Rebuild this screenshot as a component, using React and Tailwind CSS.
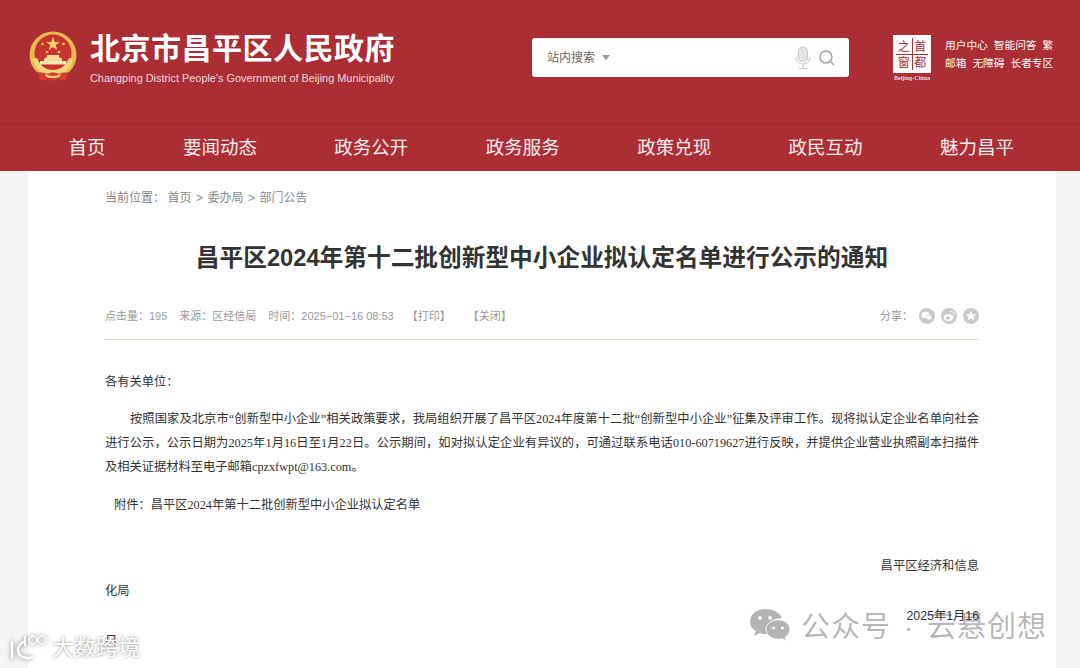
import React from 'react';

const sans = "font-['Liberation_Sans','Noto_Sans_CJK_SC',sans-serif]";
const serif = "font-['Liberation_Serif','Noto_Sans_CJK_SC',serif]";

const navItems = ['首页', '要闻动态', '政务公开', '政务服务', '政策兑现', '政民互动', '魅力昌平'];

const Emblem = () => (
  <svg width="48" height="52" viewBox="0 0 48 52">
    <circle cx="24" cy="24" r="23.500" fill="#e8b94f" />
    <circle cx="24" cy="22" r="18.500" fill="#c8322c" />
    <path d="M4 28c2 10 10 17 20 17s18-7 20-17l-4-1c-3 8-9 12-16 12S11 35 8 27z" fill="#f3d77a" />
    <path d="M24 6l1.700 5h5.100l-4.100 3 1.600 5-4.300-3-4.300 3 1.600-5-4.100-3h5.100z" fill="#f5d76e" />
    <circle cx="13.500" cy="13" r="1.300" fill="#f5d76e" />
    <circle cx="34.500" cy="13" r="1.300" fill="#f5d76e" />
    <circle cx="18" cy="21" r="1.300" fill="#f5d76e" />
    <circle cx="30" cy="21" r="1.300" fill="#f5d76e" />
    <path d="M15 30h18v-2.500l-3-1.500v-2H18v2l-3 1.500z" fill="#f2dc9a" />
    <rect x="11" y="30" width="26" height="3.500" fill="#f7e7b2" />
    <path d="M9 41c3 1 7 0 10 2 2-2 8-2 10 0 3-2 7-1 10-2l-2 8c-3 1-6 0-8-1-3 2-7 2-10 0-2 1-5 2-8 1z" fill="#d63d2e" />
    <path d="M16 42c2 4 14 4 16 0l-1 3.500c-3 2-11 2-14 0z" fill="#f3d77a" />
  </svg>
);

const Seal = () => (
  <div className="flex flex-col items-center w-[44px]">
    <div className="w-[38px] h-[38px] bg-white p-[3px]">
      <div className="w-full h-full grid grid-cols-2 grid-rows-2 gap-[1px] bg-[#ac2e35] text-[#ac2e35] text-[12px] leading-none font-['Noto_Sans_CJK_SC',sans-serif]">
        <span className="bg-white flex items-center justify-center">之</span>
        <span className="bg-white flex items-center justify-center">首</span>
        <span className="bg-white flex items-center justify-center">窗</span>
        <span className="bg-white flex items-center justify-center">都</span>
      </div>
    </div>
    <span className="text-[6px] leading-[8px] mt-[1px] font-bold text-[#f0d9da] whitespace-nowrap font-['Liberation_Serif',serif]">Beijing-China</span>
  </div>
);

const ShareIcon = ({ children }) => (
  <svg width="16" height="16" viewBox="0 0 16 16">
    <circle cx="8" cy="8" r="8" fill="#c9c9c9" />
    {children}
  </svg>
);

const WechatLogo = () => (
  <svg width="42" height="36" viewBox="0 0 42 36">
    <path d="M16 1C7.700 1 1 6.600 1 13.500c0 4 2.200 7.400 5.700 9.700L5 28l5.600-2.900c1.700.5 3.500.9 5.400.9 1 0 2-.1 2.900-.3-.5-1.300-.7-2.600-.7-4 0-6.300 6-11.400 13.600-11.400.5 0 .9 0 1.300.1C31.400 5 24.400 1 16 1z" fill="#b4b4b4" />
    <path d="M41 21.500c0-5.400-5.400-9.800-12-9.800s-12 4.400-12 9.800 5.400 9.800 12 9.800c1.400 0 2.800-.2 4-.6l4.400 2.600-1.200-4.100c2.900-1.800 4.800-4.600 4.800-7.700z" fill="#b4b4b4" stroke="#fff" strokeWidth="1" />
    <circle cx="11" cy="10" r="1.900" fill="#fff" />
    <circle cx="21" cy="10" r="1.900" fill="#fff" />
    <circle cx="24.500" cy="20" r="1.600" fill="#fff" />
    <circle cx="33.500" cy="20" r="1.600" fill="#fff" />
  </svg>
);

const WatermarkLogo = () => (
  <svg width="40" height="28" viewBox="0 0 40 28" fill="none" stroke="#fff" strokeWidth="2.400" strokeLinecap="round" className="[filter:drop-shadow(0_0_2px_rgba(0,0,0,0.5))]">
    <path d="M3 8v16" />
    <path d="M16 7c-4 2-7 5-7 9 0 5 4 8 10 8 2 0 3-.5 4-1" />
    <circle cx="24" cy="6" r="4" strokeWidth="1.500" />
    <circle cx="33" cy="6" r="4" strokeWidth="1.500" />
    <path d="M16 3v9" strokeWidth="1.800" />
  </svg>
);

export default function App() {
  return (
    <div className={`relative h-[668px] w-[1080px] overflow-hidden bg-[#f5f5f5] ${sans}`}>
      {/* Header */}
      <header className="h-[124px] bg-[#ac2e35] border-b border-[#a0272e] flex items-start">
        <div className="ml-[29px] mt-[31px]">
          <Emblem />
        </div>
        <div className="ml-[13px] mt-[31px] w-[320px]">
          <div className="text-[30px] leading-[36px] font-bold text-white tracking-[0.5px] whitespace-nowrap">北京市昌平区人民政府</div>
          <div className="text-[10.900px] leading-[12px] mt-[5px] text-[#f1d9da] whitespace-nowrap">Changping District People's Government of Beijing Municipality</div>
        </div>
        <div className="ml-[122px] mt-[38px] w-[317px] h-[39px] bg-white rounded-[3px] flex items-center pl-[15px] pr-[14px]">
          <span className="text-[12px] text-[#666]">站内搜索</span>
          <span className="ml-[7px] w-0 h-0 border-x-[4px] border-x-transparent border-t-[5px] border-t-[#999]" />
          <svg className="ml-auto" width="16" height="24" viewBox="0 0 16 24" fill="none" stroke="#ccc" strokeWidth="1.200">
            <rect x="3.500" y="1" width="9" height="15" rx="4.500" fill="#e4e4e4" />
            <path d="M1 11c0 4.500 3 7 7 7s7-2.500 7-7M8 18v4M4 22.500h8" />
          </svg>
          <svg className="ml-[8px]" width="16" height="16" viewBox="0 0 16 16" fill="none" stroke="#999" strokeWidth="1.300">
            <circle cx="7" cy="7" r="6" />
            <path d="M11.500 11.500L15 15" />
          </svg>
        </div>
        <div className="ml-[41px] mt-[35px]">
          <Seal />
        </div>
        <div className="ml-[11px] mt-[36px] text-[10.700px] leading-[18px] text-white whitespace-nowrap">
          <div className="flex gap-[6px]"><span>用户中心</span><span>智能问答</span><span>繁</span></div>
          <div className="flex gap-[6px]"><span>邮箱</span><span>无障碍</span><span>长者专区</span></div>
        </div>
      </header>

      {/* Nav */}
      <nav className="h-[47px] bg-[#ac2e35] flex items-center gap-[77.400px] pl-[68.500px]">
        {navItems.map((item) => (
          <span key={item} className="text-[18.500px] text-[#f8eeee]">{item}</span>
        ))}
      </nav>

      {/* Main */}
      <main className="mx-[28px] w-[1028px] h-[497px] bg-white px-[77px]">
        <div className="pt-[18px] text-[12px] leading-[18px] text-[#888] flex gap-[4.500px]">
          <span className="mr-[-2px]">当前位置：</span>
          <span>首页</span><span>&gt;</span><span>委办局</span><span>&gt;</span><span>部门公告</span>
        </div>
        <h1 className="mt-[33px] text-center text-[23.700px] leading-[36px] font-bold text-[#333] whitespace-nowrap">
          昌平区2024年第十二批创新型中小企业拟认定名单进行公示的通知
        </h1>
        <div className="mt-[32px] h-[32px] border-b border-[#e6dcbc] flex justify-between text-[11px] leading-[16px] text-[#999]">
          <div className="flex gap-[12px]">
            <span>点击量：195</span>
            <span>来源：区经信局</span>
            <span>时间：2025−01−16 08:53</span>
            <span className="ml-[1px]">【打印】</span>
            <span className="ml-[5px]">【关闭】</span>
          </div>
          <div className="flex gap-[6px] items-start">
            <span>分享：</span>
            <ShareIcon>
              <ellipse cx="6.500" cy="7" rx="4" ry="3.200" fill="#fff" />
              <ellipse cx="10" cy="9.500" rx="3" ry="2.400" fill="#fff" stroke="#c9c9c9" strokeWidth="0.600" />
            </ShareIcon>
            <ShareIcon>
              <ellipse cx="7.500" cy="9.500" rx="5" ry="3.500" fill="#fff" />
              <ellipse cx="7" cy="10" rx="2.200" ry="1.600" fill="#c9c9c9" />
              <path d="M9.500 3.500c2.500-.5 4 1.200 3.500 3.500" fill="none" stroke="#fff" strokeWidth="1" />
            </ShareIcon>
            <ShareIcon>
              <path d="M8 2.800l1.500 3.400 3.700.3-2.800 2.400.9 3.600L8 10.600l-3.300 1.900.9-3.600-2.800-2.400 3.700-.3z" fill="#fff" />
            </ShareIcon>
          </div>
        </div>

        <div className={`${serif} text-[12.250px] leading-[24px] text-[#333]`}>
          <p className="mt-[30px]">各有关单位：</p>
          <div className="mt-[13px]">
            <p className="pl-[25px] [text-align-last:justify] whitespace-nowrap">按照国家及北京市“创新型中小企业”相关政策要求，我局组织开展了昌平区2024年度第十二批“创新型中小企业”征集及评审工作。现将拟认定企业名单向社会</p>
            <p className="[text-align-last:justify] whitespace-nowrap">进行公示，公示日期为2025年1月16日至1月22日。公示期间，如对拟认定企业有异议的，可通过联系电话010-60719627进行反映，并提供企业营业执照副本扫描件</p>
            <p>及相关证据材料至电子邮箱cpzxfwpt@163.com。</p>
          </div>
          <p className="mt-[14px] pl-[9px]">附件：昌平区2024年第十二批创新型中小企业拟认定名单</p>
        </div>

        <div className="text-[12.300px] leading-[24px] text-[#333]">
          <p className="mt-[37px] text-right">昌平区经济和信息</p>
          <p className="mt-[1px]">化局</p>
          <p className="mt-[1px] text-right">2025年1月16</p>
          <p className="mt-[1px]">日</p>
        </div>
      </main>

      {/* Watermarks */}
      <div className="absolute left-[749px] top-[606px] flex items-center gap-[10px]">
        <WechatLogo />
        <div className="flex pt-[3px] text-[29px] leading-[36px] tracking-[1px] text-black/30 whitespace-nowrap">
          <span>公众号</span>
          <span className="w-[36px] text-center">·</span>
          <span>云悬创想</span>
        </div>
      </div>
      <div className="absolute left-[9px] top-[633px] flex items-center gap-[3px] text-white [text-shadow:0_0_3px_rgba(0,0,0,0.5)]">
        <WatermarkLogo />
        <span className="text-[22px] leading-[30px] whitespace-nowrap">大数跨境</span>
      </div>
    </div>
  );
}
